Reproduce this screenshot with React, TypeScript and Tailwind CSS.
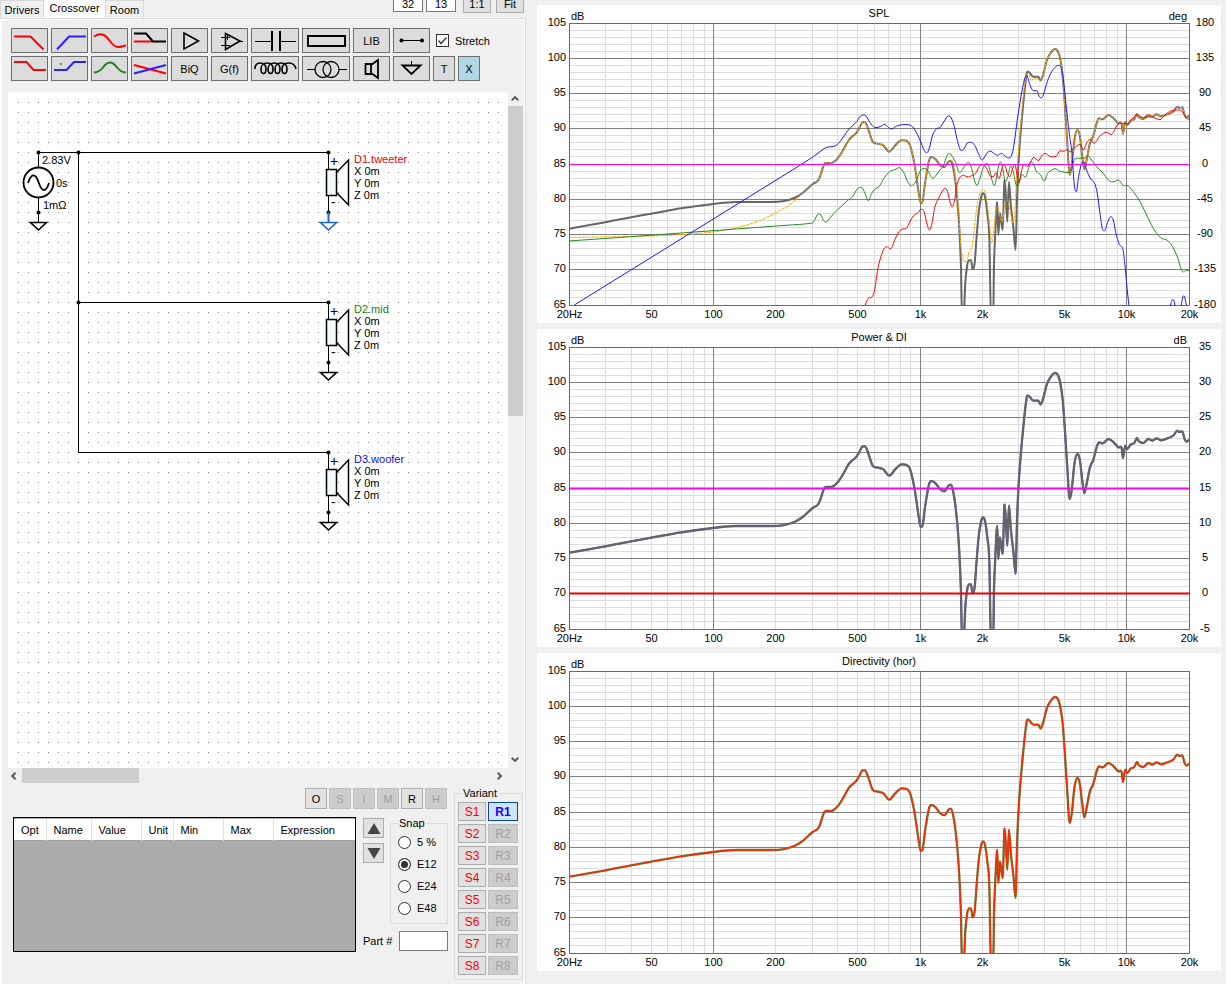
import type { ReactNode } from "react";

type Point = [number, number];

/* Plot area in chart pixels; traces are stored at three units per pixel. */
const PLOT = { left: 32, top: 18, width: 620, height: 282 };

const toPoints = (text: string): Point[] =>
  text
    .trim()
    .split(/\s+/)
    .map((pair) => pair.split(",").map(Number) as Point);

const slope = (a: Point, b: Point) => (a[0] === b[0] ? 0 : (b[1] - a[1]) / (b[0] - a[0]));

const smoothPath = (text: string) => {
  const pts = toPoints(text);
  const last = pts.length - 1;
  // flat tangents at local extremes keep the curve from overshooting
  const tangents = pts.map((p, i) => {
    if (i === 0) return slope(p, pts[1]);
    if (i === last) return slope(pts[last - 1], p);
    const before = p[1] - pts[i - 1][1];
    const after = pts[i + 1][1] - p[1];
    return before * after <= 0 ? 0 : slope(pts[i - 1], pts[i + 1]);
  });
  let d = `M${pts[0][0]} ${pts[0][1]}`;
  for (let i = 0; i < last; i++) {
    const [x1, y1] = pts[i];
    const [x2, y2] = pts[i + 1];
    const third = (x2 - x1) / 3;
    // long spans are straight phase or level ramps
    if (third > 60) {
      d += `L${x2} ${y2}`;
      continue;
    }
    d += `C${x1 + third} ${y1 + tangents[i] * third} ${x2 - third} ${y2 - tangents[i + 1] * third} ${x2} ${y2}`;
  }
  return d;
};

const SUM_LOW =
  "1,617 109,598 186,583 247,572 337,556 433,543 501,537 601,537 641,535 676,525 701,510 731,483 ";
const SUM_MID =
  "746,474 753,461 766,423 776,420 791,419 806,406 821,384 841,349 861,331 871,315 881,298 888,298 898,319 911,356 926,362 943,367 961,386 978,368 998,352 1013,354 1023,366 1036,421 1051,521 1055,539 1060,539 1068,481 1080,413 1088,402 1100,409 1113,426 1126,433 1138,417 1144,413 ";
const SUM_NOTCH =
  "1151,426 1160,481 1169,581 1176,731 1179,880 1184,880 1189,781 1195,726 1201,712 1206,712 1211,739 1217,721 1223,641 1230,561 1237,521 1242,511 1248,521 1255,571 1261,641 1266,880 1273,880 1275,731 1279,631 1283,551 1285,537 1288,636 1293,571 1301,621 1306,481 1308,476 1315,596 1320,476 1326,551 1333,611 1340,681 1344,531 1348,431 1354,341 1363,241 1373,153 1379,147 1393,161 1408,161 ";
const SUM_HIGH =
  "1415,173 1423,153 1434,111 1446,89 1458,78 1466,83 1473,103 1481,156 1488,251 1495,361 1502,456 1508,431 1517,346 1526,321 1533,341 1540,401 1546,439 1553,411 1563,361 1573,339 1583,301 1590,286 1601,289 1618,276 1633,285 1648,301 1658,303 1662,333 1669,296 1675,306 1685,293 1696,288 1704,273 1710,283 1723,288 1738,276 1750,281 1763,274 1776,280 1793,275 1813,266 1825,251 1831,255 1840,253 1847,276 1853,284 1861,278";

const SUM = SUM_LOW + SUM_MID + SUM_NOTCH + SUM_HIGH;

const TARGET =
  "1,643 101,642 201,640 301,637 371,633 433,627 481,619 531,607 581,589 621,569 651,553 673,536 703,509 733,479 " +
  SUM_MID +
  "1150,413 1161,481 1169,561 1175,661 1183,711 1193,713 1201,686 1210,666 1218,601 1225,541 1235,506 1243,499 1253,526 1263,621 1269,661 1275,621 1281,561 1286,551 1293,581 1300,596 1307,546 1315,531 1323,561 1333,601 1339,541 1343,451 1351,361 1361,241 1371,161 1378,153 1388,171 1403,166 " +
  SUM_HIGH;

const WOOFER =
  "16,846 651,453 733,401 768,375 778,372 798,369 813,356 838,321 863,296 878,277 890,278 908,306 921,314 933,311 948,304 958,313 968,318 983,309 1003,305 1025,307 1038,321 1053,351 1066,383 1073,389 1081,376 1091,336 1103,317 1113,314 1125,296 1138,279 1146,283 1156,311 1166,356 1177,383 1186,376 1195,360 1208,358 1218,368 1228,391 1240,411 1250,396 1263,384 1275,391 1285,397 1298,391 1308,399 1318,405 1327,399 1335,366 1345,291 1356,221 1366,171 1373,157 1383,186 1393,203 1403,203 1410,219 1416,225 1423,216 1435,176 1448,146 1463,129 1470,127 1477,136 1485,186 1493,261 1501,331 1509,391 1516,486 1522,506 1529,461 1538,421 1545,418 1553,441 1565,468 1577,481 1585,511 1593,571 1600,616 1607,623 1615,601 1625,581 1633,591 1641,631 1651,664 1661,676 1667,716 1673,781 1680,846 1690,900 1795,900 1805,846 1809,833 1813,830 1818,846 1824,880 1830,880 1837,846 1843,819 1847,821 1852,846 1858,880";

const MID =
  "1,654 201,640 433,623 651,607 731,600 736,593 745,576 753,573 763,591 770,598 778,592 793,573 818,549 838,531 851,521 865,498 878,493 888,511 898,533 908,511 918,498 930,491 945,466 963,445 978,440 991,434 1003,446 1018,479 1028,488 1040,477 1053,446 1065,436 1076,442 1085,459 1093,466 1101,457 1113,441 1123,429 1133,401 1141,391 1149,399 1161,421 1171,449 1181,439 1190,424 1199,418 1208,436 1216,471 1224,487 1233,466 1243,433 1253,421 1261,433 1269,471 1277,488 1283,461 1289,429 1295,417 1301,436 1309,476 1317,461 1325,429 1333,446 1339,476 1345,491 1353,471 1359,453 1369,463 1379,436 1386,416 1393,423 1403,446 1415,456 1426,474 1436,451 1446,443 1458,437 1473,445 1501,449 1509,431 1517,409 1533,406 1548,405 1557,400 1568,411 1583,431 1603,451 1618,471 1631,477 1648,471 1663,487 1678,489 1693,506 1713,536 1733,576 1753,616 1775,644 1793,651 1808,666 1825,701 1837,739 1845,747 1852,742 1861,743";

const TWEETER =
  "888,847 898,826 910,821 918,796 925,746 933,711 943,681 953,671 965,678 978,649 991,625 1001,618 1013,615 1023,596 1033,579 1045,571 1057,559 1065,566 1075,606 1082,621 1089,601 1098,551 1113,518 1128,496 1136,506 1143,536 1150,551 1157,531 1163,491 1171,466 1183,457 1198,462 1210,457 1220,451 1231,431 1243,425 1253,436 1266,461 1273,461 1281,449 1290,467 1300,433 1307,427 1315,451 1323,461 1331,436 1338,426 1345,461 1350,479 1356,451 1365,423 1375,431 1385,416 1395,403 1408,413 1418,399 1428,391 1445,401 1463,399 1473,383 1485,385 1495,379 1503,387 1515,376 1533,364 1543,381 1555,356 1565,349 1575,361 1593,339 1613,328 1627,335 1643,309 1655,300 1675,303 1688,289 1703,276 1723,284 1743,281 1773,290 1788,276 1808,263 1828,261 1840,266 1851,283 1861,290";

type Trace = { data: string; color: string; width: number; dash?: string };

type ChartProps = {
  id: string;
  title: string;
  rightUnit?: string;
  rightLabels?: string[];
  levels?: { db: number; color: string; width: number }[];
  traces: Trace[];
};

const FREQ_LABELS: [number, string][] = [
  [20, "20Hz"],
  [50, "50"],
  [100, "100"],
  [200, "200"],
  [500, "500"],
  [1000, "1k"],
  [2000, "2k"],
  [5000, "5k"],
  [10000, "10k"],
  [20000, "20k"],
];

const FREQ_LINES = [
  30, 40, 50, 60, 70, 80, 90, 200, 300, 400, 500, 600, 700, 800, 900, 2000, 3000,
  4000, 5000, 6000, 7000, 8000, 9000, 100, 1000, 10000,
];

const xOf = (hz: number) =>
  PLOT.left + Math.floor((Math.log10(hz / 20) / 3) * PLOT.width + 0.01) + 0.5;
const yOf = (db: number) =>
  PLOT.top + Math.floor(((105 - db) / 40) * PLOT.height) + 0.5;

function Chart({ id, title, rightUnit, rightLabels, levels = [], traces }: ChartProps) {
  const right = PLOT.left + PLOT.width + 0.5;
  const bottom = PLOT.top + PLOT.height + 0.5;
  const dbs = Array.from({ length: 41 }, (_, i) => 65 + i);
  const minor = dbs.filter((db) => db % 5 !== 0);
  const major = dbs.filter((db) => db % 5 === 0).reverse();

  return (
    <article className="bg-white">
      <svg
        viewBox="0 0 684 318"
        className="block w-full font-['Liberation_Sans',sans-serif] text-[11px]"
        role="img"
        aria-label={title}
      >
        <defs>
          <clipPath id={id}>
            <rect x={PLOT.left} y={PLOT.top} width={PLOT.width + 1} height={PLOT.height + 1} />
          </clipPath>
        </defs>
        <g strokeWidth={1} shapeRendering="crispEdges">
          {minor.map((db) => (
            <path key={db} d={`M${PLOT.left} ${yOf(db)}H${right}`} stroke="#dcdcdc" />
          ))}
          {FREQ_LINES.map((hz) => (
            <path
              key={hz}
              d={`M${xOf(hz)} ${PLOT.top}V${bottom}`}
              stroke={hz === 100 || hz === 1000 || hz === 10000 ? "#808080" : "#dcdcdc"}
            />
          ))}
          {major.map((db) => (
            <path key={db} d={`M${PLOT.left} ${yOf(db)}H${right}`} stroke="#808080" />
          ))}
          <path d={`M32.5 18.5H${right}V${bottom}H32.5Z`} fill="none" stroke="#696969" />
        </g>
        <g clipPath={`url(#${id})`} fill="none">
          {traces.map((trace) => (
            <path
              key={trace.color}
              d={smoothPath(trace.data)}
              transform={`translate(${PLOT.left} ${PLOT.top}) scale(0.3333)`}
              stroke={trace.color}
              strokeWidth={trace.width}
              strokeDasharray={trace.dash}
              strokeLinejoin="round"
            />
          ))}
          {levels.map((level) => (
            <path
              key={level.db}
              d={`M33 ${yOf(level.db)}H${right}`}
              stroke={level.color}
              strokeWidth={level.width}
            />
          ))}
        </g>
        <g fill="#000">
          <text x={342} y={12} textAnchor="middle">
            {title}
          </text>
          <text x={34} y={15}>
            dB
          </text>
          <text x={650} y={15} textAnchor="end">
            {rightUnit}
          </text>
          {major.map((db, i) => (
            <g key={db} textAnchor="end">
              <text x={29} y={21 + Math.floor(i * 35.25)}>
                {db}
              </text>
              {rightLabels && (
                <text x={668} y={21 + Math.floor(i * 35.25)} textAnchor="middle">
                  {rightLabels[i]}
                </text>
              )}
            </g>
          ))}
          {FREQ_LABELS.map(([hz, label]) => (
            <text key={hz} x={xOf(hz)} y={313} textAnchor="middle">
              {label}
            </text>
          ))}
        </g>
      </svg>
    </article>
  );
}

/* ---------- toolbar ---------- */

type Tool = { name: string; wide?: boolean; text?: string; icon?: ReactNode };

const RED = "#fa0505";
const BLUE = "#2a22ff";

const TOOLS_TOP: Tool[] = [
  { name: "Low pass", icon: <path d="M3 8.5H19.5L32.5 21.5" stroke={RED} /> },
  { name: "High pass", icon: <path d="M6 21.5L18 8.5H35" stroke={BLUE} /> },
  {
    name: "All pass",
    icon: <path d="M3 8.5C7 6 12 5 16 9.5C20 14 22 19 27 19C30 19 32 18 35 17.5" stroke={RED} />,
  },
  {
    name: "Shelf",
    icon: (
      <>
        <path d="M3 13.5H22" stroke={RED} />
        <path d="M3 5.5H15L22 13.5H35" />
      </>
    ),
  },
  { name: "Buffer", icon: <path d="M13 5L27.5 13L13 21Z" strokeWidth={1.6} /> },
  {
    name: "Op amp",
    icon: (
      <>
        <path d="M14.5 5.5L29 13L14.5 21.5Z" strokeWidth={1.6} />
        <path d="M10 9.5H19M10 17.5H19M16.5 7V12M29 13.5H32" strokeWidth={1} />
      </>
    ),
  },
  {
    name: "Capacitor",
    wide: true,
    icon: (
      <>
        <path d="M4 13.5H21M29 13.5H45" strokeWidth={1} />
        <path d="M21 3V23M29 3V23" />
      </>
    ),
  },
  { name: "Resistor", wide: true, icon: <path d="M6 8H43V18H6Z" /> },
  { name: "Library", text: "LIB" },
  {
    name: "Wire",
    icon: (
      <>
        <path d="M8 12.5H29" strokeWidth={1} />
        <circle cx="8.5" cy="12.5" r="2" fill="#000" stroke="none" />
        <circle cx="29" cy="12.5" r="2" fill="#000" stroke="none" />
      </>
    ),
  },
];

const TOOLS_BOTTOM: Tool[] = [
  { name: "Low shelf", icon: <path d="M3 6H15.5L22.5 14H35" stroke={RED} /> },
  {
    name: "High shelf",
    icon: (
      <>
        <path d="M3 14H15.5L23 6H35" stroke={BLUE} />
        <path d="M9 8H10.5" stroke="#333" strokeWidth={1.5} />
      </>
    ),
  },
  {
    name: "Peak",
    icon: <path d="M3 16.5C13 16 12 6.5 19 6.5C26 6.5 25 16 35 16.5" stroke="#208020" />,
  },
  {
    name: "Cross",
    icon: (
      <>
        <path d="M3 9L35 17.5" stroke={RED} />
        <path d="M3 17.5L35 9" stroke={BLUE} />
      </>
    ),
  },
  { name: "Biquad", text: "BiQ" },
  { name: "Transfer function", text: "G(f)" },
  {
    name: "Inductor",
    wide: true,
    icon: (
      <path
        d="M4 13C4 8 7 7 9 7C14 7 15 10 15 13C15 19 10 19 10 13C10 9 13 7 16 7C21 7 22 10 22 13C22 19 17 19 17 13C17 9 20 7 23 7C28 7 29 10 29 13C29 19 24 19 24 13C24 9 27 7 30 7C35 7 36 10 36 13C36 19 31 19 31 13C31 9 34 7 38 7C42 7 44 9 45 13"
        strokeWidth={1.6}
      />
    ),
  },
  {
    name: "Transformer",
    wide: true,
    icon: (
      <>
        <path d="M5 13.5H13M37 13.5H45" strokeWidth={1} />
        <circle cx="21" cy="13.5" r="8" strokeWidth={1.3} />
        <circle cx="29" cy="13.5" r="8" strokeWidth={1.3} />
      </>
    ),
  },
  {
    name: "Driver",
    icon: <path d="M12.5 8H18V18H12.5ZM18 9L25 4V22L18 17" strokeWidth={1.8} />,
  },
  {
    name: "Ground",
    icon: (
      <>
        <path d="M18.5 5V9" strokeWidth={1} />
        <path d="M9.5 9.5H27.5L18.5 18Z" strokeWidth={1.8} />
      </>
    ),
  },
];

function ToolButton({ tool }: { tool: Tool }) {
  return (
    <button
      type="button"
      aria-label={tool.name}
      className={
        tool.wide
          ? "h-[25px] w-12 border border-[#6e6e6e] bg-[#dcdcdc]"
          : "h-[25px] w-[37px] border border-[#6e6e6e] bg-[#dcdcdc]"
      }
    >
      {tool.text ?? (
        <svg
          viewBox={tool.wide ? "1 1 46 23" : "1 1 35 23"}
          className="block h-full w-full"
          fill="none"
          stroke="#000"
          strokeWidth={2}
        >
          {tool.icon}
        </svg>
      )}
    </button>
  );
}

function Toolbar() {
  return (
    <div className="flex flex-col gap-[3px] pt-2 pl-[9px]">
      <div className="flex gap-[3px]">
        {TOOLS_TOP.map((tool) => (
          <ToolButton key={tool.name} tool={tool} />
        ))}
        <label className="flex items-center gap-1.5 pl-[3px]">
          <span className="grid">
            <input
              type="checkbox"
              defaultChecked
              className="col-start-1 row-start-1 size-[13px] appearance-none border border-[#333] bg-white"
            />
            <svg
              viewBox="0 0 13 13"
              className="pointer-events-none col-start-1 row-start-1 size-[13px]"
              fill="none"
              stroke="#333"
              strokeWidth={1.3}
            >
              <path d="M2.5 6.5L5 9.5L10.5 3.5" />
            </svg>
          </span>
          Stretch
        </label>
      </div>
      <div className="flex gap-[3px]">
        {TOOLS_BOTTOM.map((tool) => (
          <ToolButton key={tool.name} tool={tool} />
        ))}
        <button type="button" className="h-[25px] w-[22px] border border-[#6e6e6e] bg-[#dcdcdc]">
          T
        </button>
        <button type="button" className="h-[25px] w-[22px] border border-[#6e6e6e] bg-[#aed8e8]">
          X
        </button>
      </div>
    </div>
  );
}

/* ---------- schematic ---------- */

function Ground({ color = "#000" }: { color?: string }) {
  return (
    <g stroke={color} fill="none">
      <path d="M0.5 0V10" strokeWidth={color === "#000" ? 1 : 2} />
      <path d="M-7.5 10.5H8.5L0.5 18Z" strokeWidth={1.6} />
    </g>
  );
}

type DriverProps = { x: number; y: number; name: string; color: string; ground?: string };

function Driver({ x, y, name, color, ground }: DriverProps) {
  return (
    <g transform={`translate(${x} ${y})`}>
      <path d="M0.5 0V17M0.5 44V60" stroke="#000" />
      <rect x={-1.5} y={17.5} width={10} height={26} fill="#f4f9fc" stroke="#000" strokeWidth={1.5} />
      <path d="M9 20L20.5 8V53L9 41" fill="none" stroke="#000" strokeWidth={1.5} />
      <circle cx={0.5} cy={0.5} r={2} />
      <circle cx={0.5} cy={60.5} r={2} />
      <g transform="translate(0 60)">
        <Ground color={ground} />
      </g>
      <text x={2} y={14} fontSize={14}>
        +
      </text>
      <text x={3} y={55} fontSize={14}>
        -
      </text>
      <text x={26} y={11} fill={color}>
        {name}
      </text>
      <text x={26} y={23}>
        X 0m
      </text>
      <text x={26} y={35}>
        Y 0m
      </text>
      <text x={26} y={47}>
        Z 0m
      </text>
    </g>
  );
}

function Schematic() {
  return (
    <svg
      className="block h-full min-h-0 w-full bg-white text-[11px]"
      role="img"
      aria-label="Crossover schematic"
    >
      <defs>
        <pattern id="dots" width="10" height="10" patternUnits="userSpaceOnUse">
          <rect width="1" height="1" fill="#808080" />
        </pattern>
      </defs>
      <rect x="10" y="10" width="100%" height="100%" fill="url(#dots)" />
      <g stroke="#000" fill="none">
        <path d="M30 60.5H320M70.5 60V360.5H320M70 210.5H320" />
        <path d="M30.5 60V75M30.5 105V120" />
        <circle cx={30.5} cy={90.5} r={15} strokeWidth={1.8} fill="#fff" />
        <path d="M20 91C23 82 27 80 30.5 90C34 101 38 100 41 91" strokeWidth={1.8} />
      </g>
      <circle cx={30.5} cy={60.5} r={2} />
      <circle cx={70.5} cy={60.5} r={2} />
      <circle cx={70.5} cy={210.5} r={2} />
      <circle cx={30.5} cy={120.5} r={2} />
      <g transform="translate(30 120)">
        <Ground />
      </g>
      <text x={34} y={72}>
        2.83V
      </text>
      <text x={48} y={95}>
        0s
      </text>
      <text x={35} y={117}>
        1mΩ
      </text>
      <Driver x={320} y={60} name="D1.tweeter" color="#f00010" ground="#1f66d0" />
      <Driver x={320} y={210} name="D2.mid" color="#208010" />
      <Driver x={320} y={360} name="D3.woofer" color="#1010e8" />
    </svg>
  );
}

const CHEVRONS = {
  up: "M4 9L7.5 5.5L11 9",
  down: "M4 4L7.5 7.5L11 4",
  left: "M8 4L4.5 7.5L8 11",
  right: "M4 4L7.5 7.5L4 11",
};

function ScrollArrow({ direction }: { direction: keyof typeof CHEVRONS }) {
  return (
    <button
      type="button"
      aria-label={`Scroll ${direction}`}
      className="grid size-[14px] place-items-center"
    >
      <svg viewBox="0 0 15 15" className="size-[14px]" fill="none" stroke="#555" strokeWidth={2}>
        <path d={CHEVRONS[direction]} />
      </svg>
    </button>
  );
}

/* ---------- bottom panel ---------- */

const PARAM_COLUMNS = [
  { label: "Opt", className: "w-8" },
  { label: "Name", className: "w-[45px]" },
  { label: "Value", className: "w-[50px]" },
  { label: "Unit", className: "w-8" },
  { label: "Min", className: "w-[50px]" },
  { label: "Max", className: "w-[50px]" },
  { label: "Expression", className: "w-auto" },
];

const MODES = [
  { label: "O", enabled: true },
  { label: "S", enabled: false },
  { label: "I", enabled: false },
  { label: "M", enabled: false },
  { label: "R", enabled: true },
  { label: "H", enabled: false },
];

const BUTTON =
  "border border-[#adadad] bg-[#e1e1e1] disabled:border-[#bfbfbf] disabled:bg-[#cccccc] disabled:text-[#a0a0a0]";

function ParameterPanel() {
  return (
    <div className="flex min-w-0 flex-1 flex-col gap-2 pt-[5px]">
      <div className="flex justify-end gap-0.5 pr-px">
        {MODES.map((mode) => (
          <button
            key={mode.label}
            type="button"
            disabled={!mode.enabled}
            className={`h-[21px] w-[22px] ${BUTTON}`}
          >
            {mode.label}
          </button>
        ))}
      </div>
      <div className="flex">
        <div className="h-[135px] flex-1 border border-black bg-[#ababab] pt-px">
          <table className="w-full table-fixed border-collapse bg-white">
            <thead>
              <tr className="h-[21px] border-b border-[#a0a0a0]">
                {PARAM_COLUMNS.map((column) => (
                  <th
                    key={column.label}
                    className={`border-r border-[#e0e0e0] pt-px pl-[7px] text-left font-normal last:border-r-0 ${column.className}`}
                  >
                    {column.label}
                  </th>
                ))}
              </tr>
            </thead>
            <tbody />
          </table>
        </div>
        <div className="ml-[7px] flex w-[85px] flex-col">
          <div className="flex justify-between">
            <div className="flex flex-col gap-[5px] pt-px">
              <button
                type="button"
                aria-label="Move up"
                className={`grid h-5 w-[21px] place-items-center ${BUTTON}`}
              >
                <svg viewBox="0 0 14 11" className="h-[11px] w-3.5" fill="#444">
                  <path d="M7 0L13.5 11H0.5Z" />
                </svg>
              </button>
              <button
                type="button"
                aria-label="Move down"
                className={`grid h-5 w-[21px] place-items-center ${BUTTON}`}
              >
                <svg viewBox="0 0 14 11" className="h-[11px] w-3.5" fill="#444">
                  <path d="M7 11L13.5 0H0.5Z" />
                </svg>
              </button>
            </div>
            <fieldset className="h-[107px] w-[58px] border border-[#dcdcdc] pl-[7px]">
              <legend className="px-px leading-3">Snap</legend>
              <div className="flex flex-col gap-2.5 pt-[7px]">
                {["5 %", "E12", "E24", "E48"].map((label) => (
                  <label key={label} className="flex items-center gap-1.5 leading-3">
                    <input
                      type="radio"
                      name="snap"
                      defaultChecked={label === "E12"}
                      className="-my-px size-[13px] appearance-none rounded-full border border-[#333] bg-white checked:bg-[#333] checked:shadow-[inset_0_0_0_2px_#fff]"
                    />
                    {label}
                  </label>
                ))}
              </div>
            </fieldset>
          </div>
          <label className="mt-[7px] flex items-center justify-between">
            Part #
            <input type="text" className="h-5 w-[49px] border border-[#7a7a7a] bg-white px-1" />
          </label>
        </div>
      </div>
    </div>
  );
}

function VariantPanel() {
  return (
    <fieldset className="ml-1.5 w-[69px] border border-[#dcdcdc] px-[3px] pb-1">
      <legend className="ml-[3px] px-0.5 leading-3">Variant</legend>
      <div className="flex flex-col gap-[3px] pt-[3px]">
        {[1, 2, 3, 4, 5, 6, 7, 8].map((n) => (
          <div key={n} className="flex gap-0.5">
            <button type="button" className={`h-[19px] w-7 text-[12px] text-[#ff0000] ${BUTTON}`}>
              S{n}
            </button>
            {n === 1 ? (
              <button
                type="button"
                className="h-[19px] w-[30px] border border-[#0a4a9c] bg-[#cfe4fb] text-[12px] font-bold text-[#1000ff]"
              >
                R{n}
              </button>
            ) : (
              <button type="button" disabled className={`h-[19px] w-[30px] text-[12px] ${BUTTON}`}>
                R{n}
              </button>
            )}
          </div>
        ))}
      </div>
    </fieldset>
  );
}

/* ---------- page ---------- */

function Header() {
  return (
    <header className="flex h-[18px] items-end justify-between">
      <nav className="flex items-end" role="tablist">
        <button
          type="button"
          role="tab"
          aria-selected={false}
          className="h-[18px] w-11 border border-b-0 border-[#d9d9d9]"
        >
          Drivers
        </button>
        <button
          type="button"
          role="tab"
          aria-selected
          className="-mb-0.5 h-5 w-[61px] bg-white pb-1"
        >
          Crossover
        </button>
        <button
          type="button"
          role="tab"
          aria-selected={false}
          className="h-[18px] w-[39px] border border-b-0 border-[#d9d9d9]"
        >
          Room
        </button>
      </nav>
      <div className="flex gap-[3px] self-start pr-0.5 leading-[9px]">
        <input
          type="text"
          aria-label="Columns"
          defaultValue="32"
          className="h-3 w-[30px] border border-t-0 border-[#7a7a7a] bg-white pb-1 text-center"
        />
        <input
          type="text"
          aria-label="Rows"
          defaultValue="13"
          className="h-3 w-[30px] border border-t-0 border-[#7a7a7a] bg-white pb-1 text-center"
        />
        <button type="button" className={`ml-1 h-[13px] w-7 border-t-0 pb-[3px] ${BUTTON}`}>
          1:1
        </button>
        <button type="button" className={`ml-0.5 h-[13px] w-7 border-t-0 pb-[3px] ${BUTTON}`}>
          Fit
        </button>
      </div>
    </header>
  );
}

export default function App() {
  return (
    <main className="flex min-h-screen bg-[#f0f0f0] font-['Liberation_Sans',Arial,sans-serif] text-[11px] leading-[14px] text-black">
      <section className="flex w-[526px] shrink-0 flex-col">
        <Header />
        <div className="flex flex-1 border-t border-r border-[#dcdcdc]">
          <div className="flex flex-1 flex-col border-t border-r border-l-2 border-white">
            <Toolbar />
            <div className="mt-[11px] flex min-h-[420px] flex-1 pl-1.5">
              <div className="flex-1">
                <Schematic />
              </div>
              <div className="mr-px flex w-[15px] flex-col">
                <ScrollArrow direction="up" />
                <div className="flex-1">
                  <div className="h-[310px] bg-[#cdcdcd]" />
                </div>
                <ScrollArrow direction="down" />
              </div>
            </div>
            <div className="mr-4 ml-1.5 flex h-[15px] items-center">
              <ScrollArrow direction="left" />
              <div className="h-full flex-1">
                <div className="h-full w-[117px] bg-[#cdcdcd]" />
              </div>
              <ScrollArrow direction="right" />
            </div>
            <div className="flex pr-px pb-1 pl-[11px]">
              <ParameterPanel />
              <div className="flex pt-1">
                <VariantPanel />
              </div>
            </div>
          </div>
        </div>
      </section>
      <section className="flex min-w-0 flex-1 flex-col gap-1.5 pt-[5px] pr-[5px] pl-[11px]">
        <Chart
          id="clip-spl"
          title="SPL"
          rightUnit="deg"
          rightLabels={["180", "135", "90", "45", "0", "-45", "-90", "-135", "-180"]}
          levels={[{ db: 85, color: "#ff00ff", width: 1 }]}
          traces={[
            { data: SUM, color: "#666666", width: 6 },
            { data: TARGET, color: "#ffa500", width: 3, dash: "10 3" },
            { data: MID, color: "#228b22", width: 3 },
            { data: TWEETER, color: "#ff0000", width: 3 },
            { data: WOOFER, color: "#1e14ff", width: 3 },
          ]}
        />
        <Chart
          id="clip-power"
          title="Power & DI"
          rightUnit="dB"
          rightLabels={["35", "30", "25", "20", "15", "10", "5", "0", "-5"]}
          levels={[
            { db: 85, color: "#ff00ff", width: 2 },
            { db: 70, color: "#f00000", width: 2 },
          ]}
          traces={[
            { data: SUM, color: "#5f5790", width: 7 },
            { data: SUM, color: "#666666", width: 5 },
          ]}
        />
        <Chart
          id="clip-directivity"
          title="Directivity (hor)"
          traces={[
            { data: SUM, color: "#6f7a3c", width: 7 },
            { data: SUM, color: "#ff2800", width: 4 },
          ]}
        />
      </section>
    </main>
  );
}
